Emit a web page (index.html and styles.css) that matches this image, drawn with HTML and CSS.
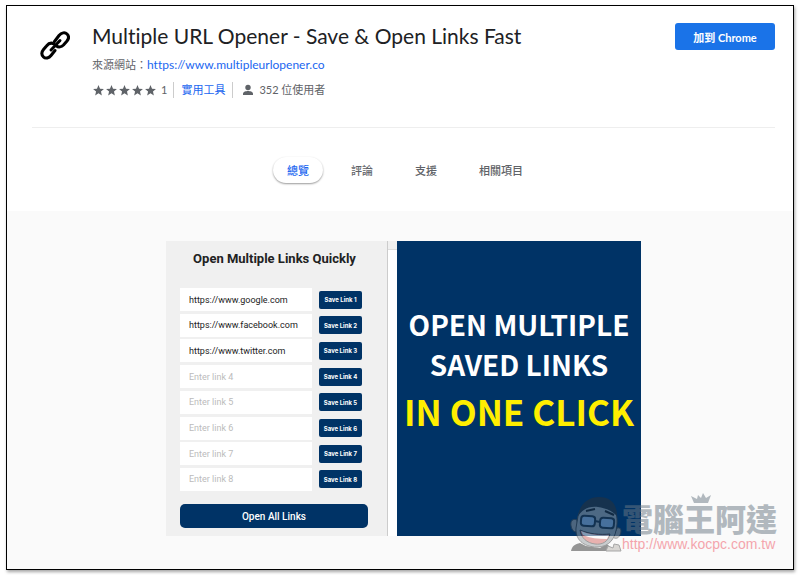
FILE: index.html
```html
<!DOCTYPE html>
<html lang="zh-Hant">
<head>
  <meta charset="UTF-8" />
  <meta name="viewport" content="width=device-width, initial-scale=1.0" />
  <title>Multiple URL Opener - Save &amp; Open Links Fast</title>
  <link rel="stylesheet" href="styles.css">
</head>
<body>

  <div class="window">
    <header class="item-header">
      <svg class="logo" viewBox="0 0 30 30" aria-hidden="true">
        <g fill="none" stroke="#000" stroke-width="3" stroke-linecap="round">
          <path d="M14.500 11.500 19 5.500C21.500 2.500 25 2 27 4s2 4.500 0 7l-3.500 4c-2 2-5 2.500-7 1" />
          <path d="M14 14c-2.500-1.500-5.500-.5-7.500 2L3.500 19.500C1.500 22 1.500 25 3.500 27s5.500 1 7.500-1.500L15 20.500" />
          <path d="M11 20 20 10.500" />
        </g>
      </svg>
      <div class="item-info">
        <h1>Multiple URL Opener - Save &amp; Open Links Fast</h1>
        <p class="source">來源網站：<a href="#">https://www.multipleurlopener.co</a></p>
        <div class="meta">
          <span class="stars">
            <svg viewBox="0 0 24 24"><path d="M12 17.300 18.200 21l-1.600-7L22 9.200l-7.200-.6L12 2 9.200 8.600 2 9.200 7.500 14 5.800 21z" /></svg>
            <svg viewBox="0 0 24 24"><path d="M12 17.300 18.200 21l-1.600-7L22 9.200l-7.200-.6L12 2 9.200 8.600 2 9.200 7.500 14 5.800 21z" /></svg>
            <svg viewBox="0 0 24 24"><path d="M12 17.300 18.200 21l-1.600-7L22 9.200l-7.200-.6L12 2 9.200 8.600 2 9.200 7.500 14 5.800 21z" /></svg>
            <svg viewBox="0 0 24 24"><path d="M12 17.300 18.200 21l-1.600-7L22 9.200l-7.200-.6L12 2 9.200 8.600 2 9.200 7.500 14 5.800 21z" /></svg>
            <svg viewBox="0 0 24 24"><path d="M12 17.300 18.200 21l-1.600-7L22 9.200l-7.200-.6L12 2 9.200 8.600 2 9.200 7.500 14 5.800 21z" /></svg>
          </span>
          <span class="count">1</span>
          <a class="category" href="#">實用工具</a>
          <svg class="person" viewBox="0 0 12 12"><circle cx="6" cy="3.500" r="2.700" /><path d="M1 11V9.500C1 7.800 4 7 6 7s5 .8 5 2.500V11z" /></svg>
          <span>352 位使用者</span>
        </div>
      </div>
      <button class="add-button">加到 Chrome</button>
    </header>

    <nav class="tabs">
      <button class="tab active">總覽</button>
      <button class="tab">評論</button>
      <button class="tab">支援</button>
      <button class="tab">相關項目</button>
    </nav>

    <main class="overview">
      <div class="slide">
        <form class="popup">
          <h2>Open Multiple Links Quickly</h2>
          <div class="links">
            <div class="row"><input type="text" aria-label="Link 1" placeholder="Enter link 1" value="https://www.google.com"><button type="button">Save Link 1</button></div>
            <div class="row"><input type="text" aria-label="Link 2" placeholder="Enter link 2" value="https://www.facebook.com"><button type="button">Save Link 2</button></div>
            <div class="row"><input type="text" aria-label="Link 3" placeholder="Enter link 3" value="https://www.twitter.com"><button type="button">Save Link 3</button></div>
            <div class="row"><input type="text" aria-label="Link 4" placeholder="Enter link 4"><button type="button">Save Link 4</button></div>
            <div class="row"><input type="text" aria-label="Link 5" placeholder="Enter link 5"><button type="button">Save Link 5</button></div>
            <div class="row"><input type="text" aria-label="Link 6" placeholder="Enter link 6"><button type="button">Save Link 6</button></div>
            <div class="row"><input type="text" aria-label="Link 7" placeholder="Enter link 7"><button type="button">Save Link 7</button></div>
            <div class="row"><input type="text" aria-label="Link 8" placeholder="Enter link 8"><button type="button">Save Link 8</button></div>
          </div>
          <button class="open-all" type="button">Open All Links</button>
        </form>
        <div class="banner">
          <p>OPEN MULTIPLE</p>
          <p>SAVED LINKS</p>
          <p class="big">IN ONE CLICK</p>
        </div>
      </div>
    </main>

    <div class="watermark">
      <svg class="mascot" viewBox="0 0 52 56" aria-hidden="true">
        <path d="M1 55c1-5 4-7 9-8l6 3 14 2 6-4c4 2 6 4 7 7z" fill="#333" />
        <path d="M36 55l2-5 5 2 1-4 5 1 2 6z" fill="#b8b4ae" stroke="#555" />
        <path d="M7 24c-4-2-7 1-6 6s4 7 7 5z" fill="#999" stroke="#444" />
        <path d="M47 32c4-1 5 3 3 7s-5 4-7 2z" fill="#999" stroke="#444" />
        <path d="M8 20C12 7 20 2 29 3c13 1 19 11 18 25-1 15-8 23-20 23C13 51 5 43 6 32z" fill="#999fa3" stroke="#444" />
        <path d="M8 20C10 8 18 1 29 1c11 0 18 6 18 19-5-5-11-8-19-9-9-1-15 2-20 9z" fill="#2c3238" />
        <path d="M16 15l9-2M35 15l9 4" stroke="#222" stroke-width="2" />
        <g fill="#8dadd2" stroke="#26323e" stroke-width="2">
          <rect x="11" y="20" width="14" height="10" rx="3" transform="rotate(5 18 25)" />
          <rect x="30" y="22" width="14" height="10" rx="3" transform="rotate(5 37 27)" />
          <path d="M25 25l5 1" />
        </g>
        <path d="M10 34c9 4 20 5 30 4-2 8-8 11-15 10-8-1-14-6-15-14z" fill="#d86b66" stroke="#444" />
        <path d="M11 35c9 4 19 5 28 4l-2 4c-9 0-17-1-24-4z" fill="#fff" />
      </svg>
      <div class="mark">
        <svg class="crown" viewBox="0 0 22 12" aria-hidden="true"><path d="M4 11 1 4l6 3 1-4 3 3 2-5 3 5 5-3-3 8z" fill="#6a7884" /></svg>
        <span class="mark-name">電腦王阿達</span>
        <span class="mark-url">http://www.kocpc.com.tw</span>
      </div>
    </div>
  </div>

</body>
</html>
```
FILE: styles.css
```css
* {
  margin: 0;
  padding: 0;
  box-sizing: border-box;
}

body {
  padding: 5px 6px;
  background: #fff;
  font-family: Lato, "Noto Sans CJK TC", sans-serif;
  font-size: 11px;
  font-variant-ligatures: none;
  color: #5f6368;
}

a {
  color: #1a66f0;
  text-decoration: none;
}

button,
input {
  border: none;
  font-family: inherit;
}

.window {
  position: relative;
  border: 1px solid #000;
  box-shadow: 1px 2px 3px rgba(0, 0, 0, 0.35);
}

.item-header {
  display: flex;
  align-items: flex-start;
  height: 122px;
  margin: 0 18px 0 25px;
  padding-top: 17px;
  border-bottom: 1px solid #eee;
}

.logo {
  width: 30px;
  height: 30px;
  margin: 7px 22px 0 8px;
}

.item-info {
  flex: 1;
}

h1 {
  font-size: 21px;
  line-height: 26px;
  font-weight: 400;
  color: #202124;
}

.source {
  margin-top: 8px;
  line-height: 16px;
}

.source a {
  font-size: 12px;
}

.meta {
  display: flex;
  align-items: center;
  margin-top: 9px;
  line-height: 16px;
}

.stars {
  display: flex;
}

.stars svg {
  width: 13px;
  height: 13px;
  fill: #5f6368;
}

.count {
  margin: 0 6px 0 4px;
}

.category {
  padding: 0 7px;
  border: solid #ccc;
  border-width: 0 1px;
}

.person {
  width: 12px;
  height: 12px;
  margin: 0 5px 0 9px;
  fill: #5f6368;
}

.add-button {
  width: 100px;
  height: 27px;
  border-radius: 3px;
  background: #1a73e8;
  color: #fff;
  font-size: 11px;
  font-weight: 700;
}

.tabs {
  display: flex;
  justify-content: center;
  gap: 14px;
  padding: 29px 0 28px 10px;
}

.tab {
  height: 26px;
  padding: 0 14px;
  border-radius: 13px;
  background: none;
  color: #5f6368;
  font-size: 11px;
  font-weight: 500;
}

.tab.active {
  color: #1a66f0;
  box-shadow: 0 1px 2px rgba(0, 0, 0, 0.4);
}

.overview {
  padding: 30px 0 33px 7px;
  background: #fafafa;
}

.slide {
  display: flex;
  gap: 9px;
  width: 475px;
  margin: 0 auto;
  background: linear-gradient(#f0f0f0 8px, #ddd 8px, #ddd 9px, #fff 9px);
}

.popup {
  width: 222px;
  padding: 10px 18px 8px 14px;
  background: #f0f0f0;
  border-right: 1px solid #ccc;
}

h2 {
  font-family: Roboto, sans-serif;
  font-size: 13px;
  line-height: 16px;
  text-align: center;
  white-space: nowrap;
  color: #222;
}

.links {
  display: flex;
  flex-direction: column;
  justify-content: space-between;
  height: 203px;
  margin: 21px 0 13px;
}

.row {
  display: flex;
  align-items: center;
  gap: 7px;
}

.row input {
  width: 132px;
  height: 23px;
  padding: 0 9px;
  background: #fff;
  color: #222;
  font-family: Roboto, sans-serif;
  font-size: 9px;
}

.row input::placeholder {
  color: #bbb;
}

.row button {
  width: 43px;
  height: 18px;
  border-radius: 2px;
  background: #003366;
  color: #fff;
  font-family: Inter, sans-serif;
  font-size: 6px;
  font-weight: 700;
}

.open-all {
  width: 188px;
  height: 24px;
  border-radius: 5px;
  background: #003366;
  color: #fff;
  font-family: Roboto, sans-serif;
  font-size: 10px;
  font-weight: 500;
}

.banner {
  flex: 1;
  padding-top: 63px;
  background: #003366;
  color: #fff;
  font-family: "Noto Sans CJK TC", sans-serif;
  font-size: 28px;
  line-height: 40px;
  font-weight: 700;
  text-align: center;
  white-space: nowrap;
}

.banner .big {
  color: #ffee00;
  font-size: 35px;
  line-height: 54px;
}

.watermark {
  position: absolute;
  right: 16px;
  bottom: 17px;
  display: flex;
  align-items: flex-end;
  opacity: 0.5;
}

.mascot {
  width: 52px;
  height: 56px;
}

.mark {
  position: relative;
}

.mark-name,
.mark-url {
  display: block;
}

.mark-name {
  color: #6a7884;
  font-size: 31px;
  line-height: 34px;
  font-weight: 900;
}

.mark-url {
  color: #f05060;
  font-family: "Liberation Sans", sans-serif;
  font-size: 14px;
  line-height: 16px;
}

.crown {
  position: absolute;
  left: 68px;
  top: -10px;
  width: 22px;
  height: 12px;
}
```
